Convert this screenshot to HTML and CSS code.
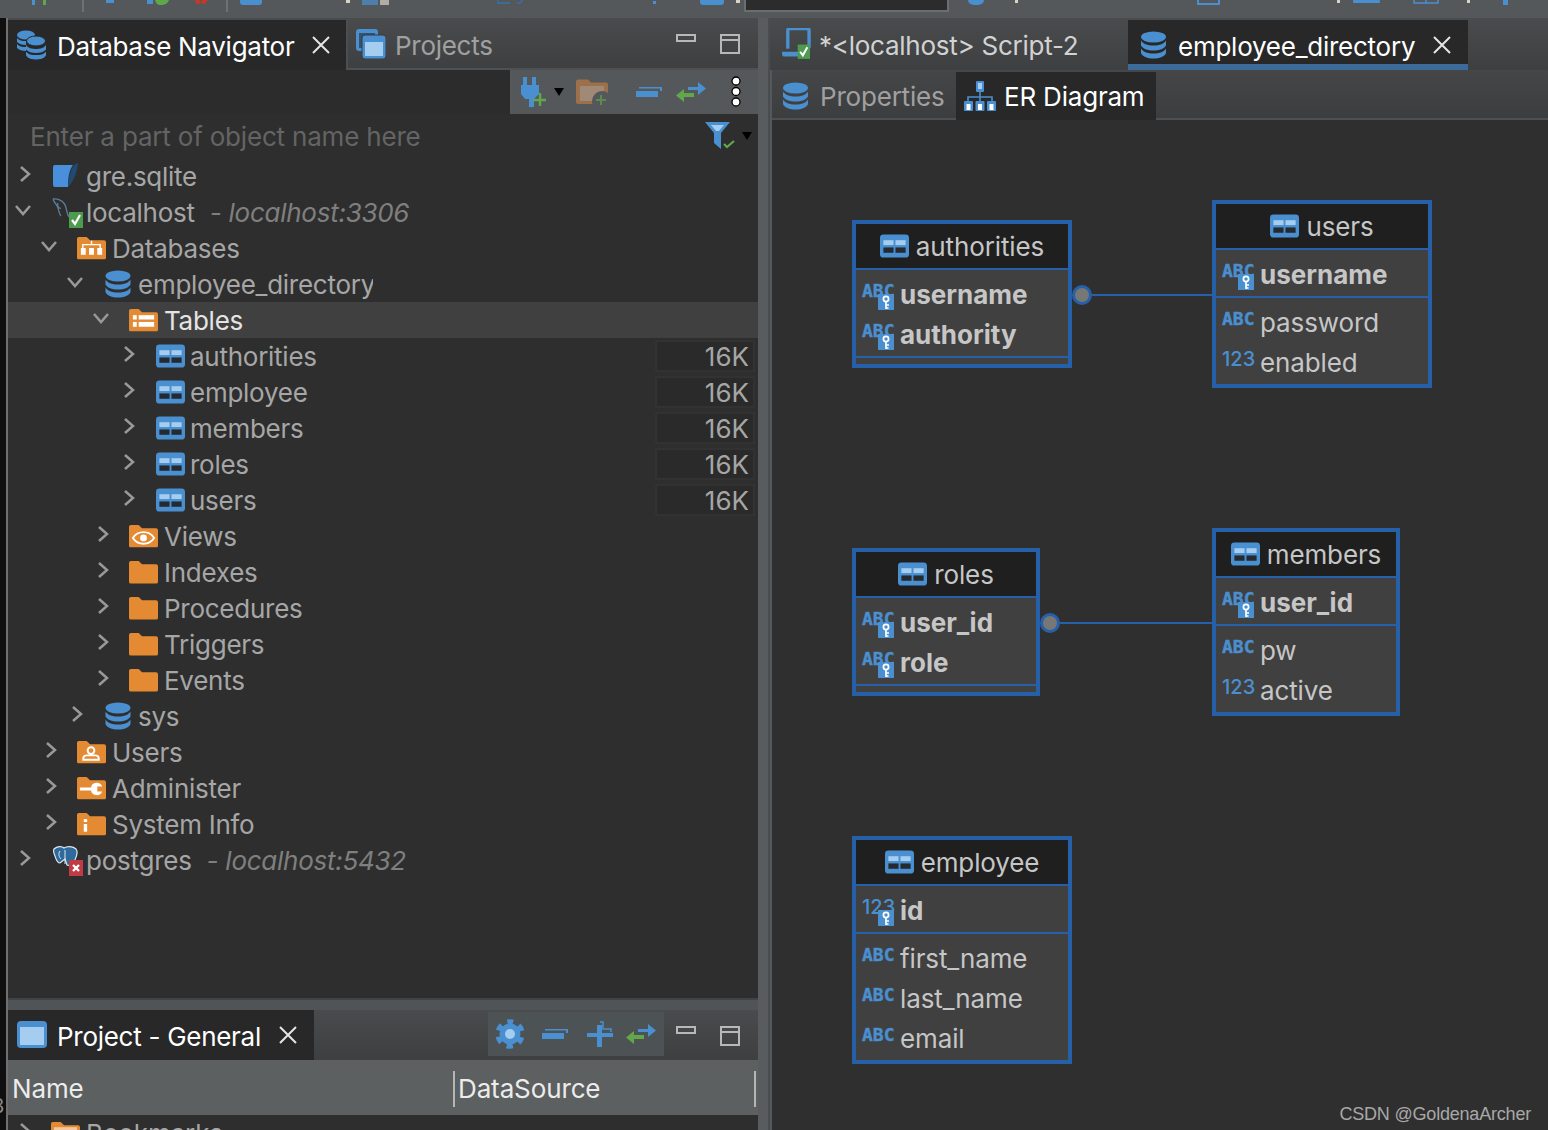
FILE: index.html
```html
<!DOCTYPE html>
<html lang="en">
<head>
<meta charset="utf-8">
<title>DBeaver</title>
<link rel="stylesheet" href="styles.css">
</head>
<body>
<svg class="defs" width="0" height="0" aria-hidden="true">
  <defs>
    <symbol id="table" viewBox="0 0 30 24">
      <rect width="30" height="24" rx="3.5" fill="#4a8fcf"/>
      <rect x="3.5" y="6" width="10.5" height="5" fill="#a5cdef"/><rect x="16" y="6" width="10.5" height="5" fill="#a5cdef"/>
      <rect x="3.5" y="13.5" width="10.5" height="5.5" fill="#252a30"/><rect x="16" y="13.5" width="10.5" height="5.5" fill="#252a30"/>
    </symbol>
    <symbol id="db" viewBox="0 0 26 28">
      <ellipse cx="13" cy="6" rx="12.5" ry="5.5" fill="#4a8fcf"/>
      <path d="M.5 9.5c1.5 3 6.500 5 12.500 5s11-2 12.500-5v5c-1.500 3-6.500 5-12.500 5S2 17.500.5 14.500z" fill="#4a8fcf"/>
      <path d="M.5 17.500c1.500 3 6.500 5 12.500 5s11-2 12.500-5v4.500c-1 3.500-6.500 5.500-12.500 5.500S1.500 25.500.5 22z" fill="#4a8fcf"/>
    </symbol>
    <symbol id="dbstack" viewBox="0 0 30 30">
      <ellipse cx="10" cy="5" rx="9" ry="4.500" fill="#4a8fcf"/>
      <path d="M1 8c2 2.500 5 3 9 3v4c-4 0-7-1-9-3zM1 14c2 2.500 5 3 9 3v4c-4 0-7-1-9-3z" fill="#4a8fcf"/>
      <ellipse cx="20" cy="11" rx="9.500" ry="5" fill="#4a8fcf" stroke="#282828" stroke-width="1"/>
      <path d="M10 15c2 3 6 4 10 4s8-1 10-4v4.500c-2 2.500-6 3.500-10 3.500s-8-1-10-3.500z" fill="#4a8fcf"/>
      <path d="M10 21.500c2 3 6 3.500 10 3.500s8-.5 10-3.500v4c-2 3-6 4-10 4s-8-1-10-4z" fill="#4a8fcf"/>
    </symbol>
    <symbol id="folder" viewBox="0 0 30 24">
      <path d="M0 2.500A2 2 0 0 1 2 .5h8l3.500 3.500H28a2 2 0 0 1 2 2V22a2 2 0 0 1-2 2H2a2 2 0 0 1-2-2z" fill="#e38a33"/>
    </symbol>
    <symbol id="fdb" viewBox="0 0 30 24">
      <use href="#folder"/>
      <path d="M15 4.500v4M6 12V8.500h18V12" fill="none" stroke="#fff" stroke-width="1.500"/>
      <rect x="4" y="12" width="5" height="7" fill="#fff"/><rect x="12.500" y="12" width="5" height="7" fill="#fff"/><rect x="21" y="12" width="5" height="7" fill="#fff"/>
    </symbol>
    <symbol id="ftab" viewBox="0 0 30 24">
      <use href="#folder"/>
      <rect x="4" y="7" width="4" height="4.500" fill="#fff"/><rect x="10" y="7" width="16" height="4.500" fill="#fff"/>
      <rect x="4" y="14" width="4" height="5" fill="#fff"/><rect x="10" y="14" width="16" height="5" fill="#fff"/>
    </symbol>
    <symbol id="feye" viewBox="0 0 30 24">
      <use href="#folder"/>
      <path d="M4 14c3-4.500 7-6 11-6s8 1.500 11 6c-3 4.500-7 6-11 6s-8-1.500-11-6z" fill="none" stroke="#fff" stroke-width="2"/>
      <circle cx="15" cy="14" r="3.500" fill="#fff"/>
    </symbol>
    <symbol id="fuser" viewBox="0 0 30 24">
      <use href="#folder"/>
      <circle cx="14.500" cy="10.500" r="3.500" fill="none" stroke="#fff" stroke-width="2"/>
      <path d="M6.500 20v-1.500c0-2 2-3 3.500-3h9c1.500 0 3.500 1 3.500 3V20z" fill="none" stroke="#fff" stroke-width="2"/>
    </symbol>
    <symbol id="fwrench" viewBox="0 0 30 24">
      <use href="#folder"/>
      <path d="M3 11.500h11.500a6 6 0 0 1 11.500-1h-5v5h5a6 6 0 0 1-11.500-1H3z" fill="#fff"/>
    </symbol>
    <symbol id="finfo" viewBox="0 0 30 24">
      <use href="#folder"/>
      <rect x="7" y="7" width="3.500" height="3" fill="#fff"/><rect x="7" y="12" width="3.500" height="8" fill="#fff"/>
    </symbol>
    <symbol id="x" viewBox="0 0 18 18">
      <path d="M1 1l16 16M17 1L1 17" stroke="currentColor" stroke-width="2" fill="none"/>
    </symbol>
    <symbol id="right" viewBox="0 0 12 18">
      <path d="M2 2l8 7-8 7" fill="none" stroke="#999" stroke-width="2.500"/>
    </symbol>
    <symbol id="down" viewBox="0 0 18 12">
      <path d="M2 2l7 8 7-8" fill="none" stroke="#999" stroke-width="2.500"/>
    </symbol>
    <symbol id="window" viewBox="0 0 30 30">
      <rect x="0" y="0" width="22" height="22" rx="3" fill="#4a8fcf"/>
      <rect x="3" y="4" width="16" height="15" fill="#35536f"/>
      <rect x="6" y="6" width="24" height="24" rx="3" fill="#4a8fcf" stroke="#3a3b3d"/>
      <rect x="9" y="13" width="18" height="14" fill="#a5cdef"/>
    </symbol>
    <symbol id="keycap" viewBox="0 0 16 16">
      <rect width="16" height="16" fill="#4a8fcf"/>
      <circle cx="8" cy="5" r="2.600" fill="none" stroke="#fff" stroke-width="1.700"/>
      <path d="M8 7.500v7.500M8 11h3M8 14h2.500" stroke="#fff" stroke-width="1.700" fill="none"/>
    </symbol>
    <symbol id="collapse" viewBox="0 0 26 10">
      <path d="M0 4h22v6H0zM3 0h23v4h-2V1.500H3z" fill="#4a8fcf"/>
    </symbol>
    <symbol id="link" viewBox="0 0 30 20">
      <path d="M12 5h10V0l8 6.500-8 6.500V8H12z" fill="#4a8fcf"/>
      <path d="M18 11H8V7l-8 6.500L8 20v-5h10z" fill="#62a84a"/>
    </symbol>
    <symbol id="min" viewBox="0 0 20 8"><rect x="1" y="1" width="18" height="6" fill="none" stroke="#b8b8b8" stroke-width="2"/></symbol>
    <symbol id="max" viewBox="0 0 20 20"><path d="M1 1h18v18H1zM1 6h18" fill="none" stroke="#b8b8b8" stroke-width="2"/></symbol>
    <symbol id="okbadge" viewBox="0 0 14 16">
      <rect width="14" height="16" fill="#4e9a4e"/>
      <path d="M3 8l3 4 5-9" fill="none" stroke="#fff" stroke-width="2.200"/>
    </symbol>
    <symbol id="tri" viewBox="0 0 10 8"><path d="M0 0h10L5 8z" fill="#000"/></symbol>
  </defs>
</svg>

<svg class="topbar" viewBox="0 0 1548 18" width="1548" height="18" aria-hidden="true">
  <g fill="#4a8fcf">
    <rect x="32" y="0" width="3" height="5"/><rect x="106" y="0" width="8" height="3"/><rect x="147" y="0" width="6" height="4"/>
    <path d="M240 0h22v2a3 3 0 0 1-3 3h-16a3 3 0 0 1-3-3z"/><rect x="653" y="1" width="3" height="3"/>
    <path d="M700 0h24v2a3 3 0 0 1-3 3h-18a3 3 0 0 1-3-3z"/><path d="M968 0h16c0 3-3 5-8 5s-8-2-8-5z"/>
    <rect x="1353" y="0" width="27" height="3" rx="1"/><rect x="1503" y="0" width="5" height="5"/>
    <rect x="362" y="0" width="16" height="5" opacity=".7"/>
  </g>
  <g fill="#5fa84a"><rect x="43" y="0" width="3" height="5"/><path d="M155 0h14c-1 3-4 5-8 5s-5-2-6-5z"/></g>
  <path d="M195 0h5l1 2 2-2h5l-3 4h-3l-2-2-1 2h-3z" fill="#c0392b"/>
  <g fill="#6d7173"><rect x="82" y="0" width="2" height="12"/><rect x="226" y="0" width="2" height="12"/></g>
  <g fill="#d9d2c5"><rect x="346" y="0" width="4" height="3"/><rect x="736" y="0" width="4" height="3"/><rect x="1015" y="0" width="3" height="3"/><rect x="1337" y="0" width="3" height="3"/><rect x="1467" y="0" width="3" height="3"/><rect x="380" y="0" width="9" height="5" opacity=".7"/></g>
  <path d="M498 0v3h12M522 0c0 3-2 3-5 3" fill="none" stroke="#3d6b99" stroke-width="2"/>
  <path d="M1198 0v4h21V0" fill="none" stroke="#4a8fcf" stroke-width="2"/>
  <path d="M1414 0v3h24V0M1426 0v3" fill="none" stroke="#4a8fcf" stroke-width="1.500"/>
  <rect x="745" y="-2" width="203" height="13" fill="#2c2c2c" stroke="#6a6e70" stroke-width="2"/>
</svg>

<div class="app">
  <div class="strip"><span class="strip-char">8</span></div>

  <section class="leftcol">
    <div class="tabs">
      <div class="tab active nav-tab">
        <svg class="tabicon"><use href="#dbstack"/></svg>
        <span>Database Navigator</span>
        <svg class="close"><use href="#x"/></svg>
      </div>
      <div class="tab plain">
        <svg class="tabicon"><use href="#window"/></svg>
        <span>Projects</span>
      </div>
      <div class="winctl">
        <svg class="ctl-min"><use href="#min"/></svg>
        <svg class="ctl-max"><use href="#max"/></svg>
      </div>
    </div>

    <div class="navtools">
      <div class="toolgroup">
        <svg class="t-plug" viewBox="0 0 26 30"><path d="M3 0h4v8h5V0h4v8h3v9l-5 5v8H9v-8H5l-4-5V8h2z" fill="#4a8fcf"/><path d="M20 16v13M13 23h13" stroke="#62a84a" stroke-width="2.400"/></svg>
        <svg class="t-tri"><use href="#tri"/></svg>
        <svg class="t-folder" viewBox="0 0 32 26"><path d="M0 2.500A2 2 0 0 1 2 .5h10l3 3h15a2 2 0 0 1 2 2V23a2 2 0 0 1-2 2H2a2 2 0 0 1-2-2z" fill="#9b704a"/><rect x="4" y="7" width="24" height="15" fill="#a08a76"/><circle cx="26" cy="22" r="10" fill="#54585a"/><path d="M25 16v10M20 21h10" stroke="#5f8a4d" stroke-width="2"/></svg>
        <svg class="t-collapse"><use href="#collapse"/></svg>
        <svg class="t-link"><use href="#link"/></svg>
        <svg class="t-kebab" viewBox="0 0 12 32"><g fill="#fff" stroke="#000" stroke-width="1.300"><circle cx="6" cy="5" r="4"/><circle cx="6" cy="15.500" r="4"/><circle cx="6" cy="26" r="4"/></g></svg>
      </div>
    </div>

    <div class="filter">
      <span class="placeholder">Enter a part of object name here</span>
      <svg class="funnel" viewBox="0 0 32 28"><path d="M0 0h25l-9 11v16l-7-6V11z" fill="#4a8fcf"/><path d="M6 3h13l-5 6h-3z" fill="#a5cdef"/><path d="M19 22l3 3 7-6" fill="none" stroke="#62a84a" stroke-width="2.200"/></svg>
      <svg class="filter-tri"><use href="#tri"/></svg>
    </div>

    <div class="tree">
      <div class="row l0"><svg class="chev"><use href="#right"/></svg>
        <svg class="ic" viewBox="0 0 29 26"><path d="M3 2h18c-3 4-5 10-5 22H3a2 2 0 0 1-2-2V4a2 2 0 0 1 2-2z" fill="#4a8fdb"/><path d="M26 0c-5 1-9 8-10 24 4-4 9-12 10-24z" fill="#214a73"/></svg>
        <span class="label">gre.sqlite</span></div>
      <div class="row l0"><svg class="chevd"><use href="#down"/></svg>
        <span class="ic badged"><svg class="fill" viewBox="0 0 29 26"><path d="M1 1c6-1 12 3 13 9 1 3 1 6 3 9M1 1c1 4 4 5 5 9 1 3 1 6 3 8M6 5c-1 3 1 6 3 5" fill="none" stroke="#597d98" stroke-width="1.300"/></svg><svg class="badge"><use href="#okbadge"/></svg></span>
        <span class="label">localhost</span><em class="sub">- localhost:3306</em></div>
      <div class="row l1"><svg class="chevd"><use href="#down"/></svg><svg class="ic icf"><use href="#fdb"/></svg><span class="label">Databases</span></div>
      <div class="row l2"><svg class="chevd"><use href="#down"/></svg><svg class="ic icdb"><use href="#db"/></svg><span class="label clip">employee_directory</span></div>
      <div class="row l3 selected"><svg class="chevd"><use href="#down"/></svg><svg class="ic icf"><use href="#ftab"/></svg><span class="label">Tables</span></div>
      <div class="row l4"><svg class="chev"><use href="#right"/></svg><svg class="ic ict"><use href="#table"/></svg><span class="label">authorities</span><span class="size">16K</span></div>
      <div class="row l4"><svg class="chev"><use href="#right"/></svg><svg class="ic ict"><use href="#table"/></svg><span class="label">employee</span><span class="size">16K</span></div>
      <div class="row l4"><svg class="chev"><use href="#right"/></svg><svg class="ic ict"><use href="#table"/></svg><span class="label">members</span><span class="size">16K</span></div>
      <div class="row l4"><svg class="chev"><use href="#right"/></svg><svg class="ic ict"><use href="#table"/></svg><span class="label">roles</span><span class="size">16K</span></div>
      <div class="row l4"><svg class="chev"><use href="#right"/></svg><svg class="ic ict"><use href="#table"/></svg><span class="label">users</span><span class="size">16K</span></div>
      <div class="row l3"><svg class="chev"><use href="#right"/></svg><svg class="ic icf"><use href="#feye"/></svg><span class="label">Views</span></div>
      <div class="row l3"><svg class="chev"><use href="#right"/></svg><svg class="ic icf"><use href="#folder"/></svg><span class="label">Indexes</span></div>
      <div class="row l3"><svg class="chev"><use href="#right"/></svg><svg class="ic icf"><use href="#folder"/></svg><span class="label">Procedures</span></div>
      <div class="row l3"><svg class="chev"><use href="#right"/></svg><svg class="ic icf"><use href="#folder"/></svg><span class="label">Triggers</span></div>
      <div class="row l3"><svg class="chev"><use href="#right"/></svg><svg class="ic icf"><use href="#folder"/></svg><span class="label">Events</span></div>
      <div class="row l2"><svg class="chev"><use href="#right"/></svg><svg class="ic icdb"><use href="#db"/></svg><span class="label">sys</span></div>
      <div class="row l1"><svg class="chev"><use href="#right"/></svg><svg class="ic icf"><use href="#fuser"/></svg><span class="label">Users</span></div>
      <div class="row l1"><svg class="chev"><use href="#right"/></svg><svg class="ic icf"><use href="#fwrench"/></svg><span class="label">Administer</span></div>
      <div class="row l1"><svg class="chev"><use href="#right"/></svg><svg class="ic icf"><use href="#finfo"/></svg><span class="label">System Info</span></div>
      <div class="row l0"><svg class="chev"><use href="#right"/></svg>
        <span class="ic badged"><svg class="fill" viewBox="0 0 29 26"><path d="M2 3c3-3 8-3 10-1 3-2 9-2 12 1 3 4 0 9-2 13l-2 4-5-1-2-6-5 4c-3 0-4-4-5-7-1-2-2-5-1-7z" fill="#2f6a9c" stroke="#e0e8ee" stroke-width="1.200"/><path d="M13 4v14M8 5c-2 3-1 6 1 8" fill="none" stroke="#e0e8ee" stroke-width="1"/></svg><svg class="badge" viewBox="0 0 14 16"><rect width="14" height="16" fill="#c23a45"/><path d="M4 5l6 6M10 5l-6 6" stroke="#fff" stroke-width="2.400"/></svg></span>
        <span class="label">postgres</span><em class="sub">- localhost:5432</em></div>
    </div>

    <div class="hsplit"></div>

    <div class="tabs lower">
      <div class="tab active proj-tab">
        <svg class="tabicon" viewBox="0 0 30 28"><rect width="30" height="27" rx="4" fill="#4a8fcf"/><rect x="3" y="6" width="24" height="18" fill="#a5cdef"/></svg>
        <span>Project - General</span>
        <svg class="close"><use href="#x"/></svg>
      </div>
      <div class="projtools">
        <svg class="p-gear" viewBox="0 0 30 30"><circle cx="15" cy="15" r="10.500" fill="#4a8fcf"/><circle cx="15" cy="15" r="12" fill="none" stroke="#4a8fcf" stroke-width="5.500" stroke-dasharray="6.283 6.283" stroke-dashoffset="3.142" transform="rotate(-90 15 15)"/><circle cx="15" cy="15" r="5" fill="#a5cdef"/></svg>
        <svg class="p-collapse"><use href="#collapse"/></svg>
        <svg class="p-expand" viewBox="0 0 26 26"><path d="M10 4h5v8h11v4H15v10h-5V16H0v-4h10z" fill="#4a8fcf"/><path d="M13 1h3v7h8v3" fill="none" stroke="#4a8fcf" stroke-width="1.500"/></svg>
        <svg class="p-link"><use href="#link"/></svg>
      </div>
      <div class="winctl">
        <svg class="ctl-min"><use href="#min"/></svg>
        <svg class="ctl-max"><use href="#max"/></svg>
      </div>
    </div>

    <div class="grid-head">
      <span class="col col-name">Name</span>
      <span class="col col-src">DataSource</span>
    </div>
    <div class="lower-tree">
      <div class="row l0 lower-row"><svg class="chev"><use href="#right"/></svg>
        <svg class="ic icf" viewBox="0 0 30 24"><use href="#folder"/><rect x="3" y="6" width="24" height="16" fill="#f0c9a0"/></svg>
        <span class="label">Bookmarks</span></div>
    </div>
  </section>

  <div class="vsplit"></div>

  <section class="rightcol">
    <div class="edtabs">
      <div class="etab script">
        <svg class="laptop" viewBox="0 0 30 32"><path d="M6 2a2 2 0 0 1 2-2h18a2 2 0 0 1 2 2v18M6 2v19" fill="none" stroke="#4a8fcf" stroke-width="3.500"/><path d="M0 24h18v5H3a3 3 0 0 1-3-3z" fill="#4a8fcf"/><use href="#okbadge" x="16" y="16" width="13" height="16"/></svg>
        <span>*&lt;localhost&gt; Script-2</span>
      </div>
      <div class="etab current">
        <svg class="edb"><use href="#db"/></svg>
        <span>employee_directory</span>
        <svg class="close"><use href="#x"/></svg>
      </div>
    </div>
    <div class="subtabs">
      <div class="stab props"><svg class="edb"><use href="#db"/></svg><span>Properties</span></div>
      <div class="stab erd">
        <svg class="ericon" viewBox="0 0 32 30"><rect x="12" y="0" width="8" height="11" rx="1" fill="#4a8fcf"/><rect x="14" y="2" width="4" height="6" fill="#a5cdef"/><path d="M16 11v5M4 21v-5h24v5M16 16v5" fill="none" stroke="#4a8fcf" stroke-width="1.600"/><g fill="#4a8fcf"><rect x="0" y="20" width="9" height="10" rx="1"/><rect x="11.500" y="20" width="9" height="10" rx="1"/><rect x="23" y="20" width="9" height="10" rx="1"/></g><g fill="#fff"><rect x="2.500" y="23" width="4" height="6"/><rect x="14" y="23" width="4" height="6"/><rect x="25.500" y="23" width="4" height="6"/></g></svg>
        <span>ER Diagram</span>
      </div>
    </div>

    <div class="canvas">
      <div class="edge edge-a"></div><div class="dot dot-a"></div>
      <div class="edge edge-b"></div><div class="dot dot-b"></div>

      <div class="node n-auth">
        <div class="nhead"><svg class="nicon"><use href="#table"/></svg><span>authorities</span></div>
        <div class="nsec pk">
          <div class="nrow"><span class="type abc">ABC<svg class="key"><use href="#keycap"/></svg></span><span>username</span></div>
          <div class="nrow"><span class="type abc">ABC<svg class="key"><use href="#keycap"/></svg></span><span>authority</span></div>
        </div>
        <div class="nsec tail"></div>
      </div>

      <div class="node n-users">
        <div class="nhead"><svg class="nicon"><use href="#table"/></svg><span>users</span></div>
        <div class="nsec pk">
          <div class="nrow"><span class="type abc">ABC<svg class="key"><use href="#keycap"/></svg></span><span>username</span></div>
        </div>
        <div class="nsec">
          <div class="nrow"><span class="type abc">ABC</span><span>password</span></div>
          <div class="nrow"><span class="type num">123</span><span>enabled</span></div>
        </div>
      </div>

      <div class="node n-roles">
        <div class="nhead"><svg class="nicon"><use href="#table"/></svg><span>roles</span></div>
        <div class="nsec pk">
          <div class="nrow"><span class="type abc">ABC<svg class="key"><use href="#keycap"/></svg></span><span>user_id</span></div>
          <div class="nrow"><span class="type abc">ABC<svg class="key"><use href="#keycap"/></svg></span><span>role</span></div>
        </div>
        <div class="nsec tail"></div>
      </div>

      <div class="node n-members">
        <div class="nhead"><svg class="nicon"><use href="#table"/></svg><span>members</span></div>
        <div class="nsec pk">
          <div class="nrow"><span class="type abc">ABC<svg class="key"><use href="#keycap"/></svg></span><span>user_id</span></div>
        </div>
        <div class="nsec">
          <div class="nrow"><span class="type abc">ABC</span><span>pw</span></div>
          <div class="nrow"><span class="type num">123</span><span>active</span></div>
        </div>
      </div>

      <div class="node n-emp">
        <div class="nhead"><svg class="nicon"><use href="#table"/></svg><span>employee</span></div>
        <div class="nsec pk">
          <div class="nrow"><span class="type num">123<svg class="key"><use href="#keycap"/></svg></span><span>id</span></div>
        </div>
        <div class="nsec">
          <div class="nrow"><span class="type abc">ABC</span><span>first_name</span></div>
          <div class="nrow"><span class="type abc">ABC</span><span>last_name</span></div>
          <div class="nrow"><span class="type abc">ABC</span><span>email</span></div>
        </div>
      </div>

      <div class="watermark">CSDN @GoldenaArcher</div>
    </div>
  </section>
</div>
</body>
</html>
```
FILE: styles.css
```css
* { box-sizing: border-box; }
html, body { margin: 0; padding: 0; height: 100%; }
body {
  width: 1548px;
  height: 1130px;
  overflow: hidden;
  background: #54585b;
  font-family: Inter, "Noto Sans", sans-serif;
  font-size: 26px;
  letter-spacing: -.12px;
  color: #a6a6a6;
}
svg { display: block; flex: none; }
.defs { position: absolute; }
.topbar { height: 18px; }

.app { display: flex; height: 1112px; }
.strip {
  width: 8px;
  background: #0f0f0f;
  border-right: 2px solid #6f6f6f;
  overflow: hidden;
  position: relative;
}
.strip-char {
  position: absolute;
  left: -8px;
  top: 1076px;
  font-size: 20px;
  color: #8a8a8a;
}

.leftcol { width: 750px; display: flex; flex-direction: column; }
.vsplit {
  width: 12px;
  background: linear-gradient(to right, #585c5f 0 10px, #4a4d50 10px);
}
.rightcol { flex: 1; display: flex; flex-direction: column; min-width: 0; }

/* tabs */
.tabs {
  height: 52px;
  display: flex;
  align-items: flex-end;
  background: linear-gradient(#4a4b4d, #3e3f41);
  border-bottom: 2px solid #4f5052;
  position: relative;
}
.tabs.lower { height: 50px; border-bottom: 0; align-items: stretch; }
.tab {
  display: flex;
  align-items: center;
  height: 50px;
  margin-bottom: -2px;
  white-space: nowrap;
  letter-spacing: -.28px;
}
.tab span { margin-top: 3px; }
.tabs.lower .tab { margin-bottom: 0; }
.tabs.lower .tab span { margin-top: 2px; }
.tab.active { background: #282828; color: #fff; }
.nav-tab { width: 338px; padding-left: 8px; }
.proj-tab { width: 306px; padding-left: 9px; }
.nav-tab .tabicon { margin-right: 11px; }
.tab.plain { padding-left: 8px; border-left: 2px solid #4d4e50; height: 48px; margin-bottom: 0; color: #a0a0a0; }
.tabicon { width: 30px; height: 30px; margin-right: 10px; }
.tab.plain .tabicon { margin-right: 9px; }
.close { width: 18px; height: 18px; margin-left: 18px; color: #e6e6e6; }
.winctl {
  position: absolute;
  right: 0;
  top: 14px;
  width: 82px;
  display: flex;
  align-items: flex-start;
  gap: 24px;
}
.tabs.lower .winctl { top: 14px; }
.ctl-min { width: 20px; height: 8px; margin-top: 2px; }
.ctl-max { width: 20px; height: 20px; margin-top: 2px; }

.navtools {
  height: 44px;
  background: #2c2c2c;
  display: flex;
  justify-content: flex-end;
}
.toolgroup {
  width: 248px;
  background: #54585a;
  display: flex;
  align-items: center;
  padding-left: 10px;
}
.t-plug { width: 26px; height: 30px; }
.t-tri { width: 10px; height: 8px; margin-left: 8px; }
.t-folder { width: 32px; height: 26px; margin-left: 12px; }
.t-collapse { width: 26px; height: 10px; margin-left: 28px; }
.t-link { width: 30px; height: 20px; margin-left: 14px; }
.t-kebab { width: 12px; height: 32px; margin-left: 24px; }

.filter {
  height: 44px;
  background: #2e2e2e;
  display: flex;
  align-items: center;
  padding-left: 22px;
}
.placeholder { color: #646464; letter-spacing: -.19px; }
.funnel { width: 32px; height: 28px; margin-left: auto; }
.filter-tri { width: 10px; height: 8px; margin-left: 5px; margin-right: 6px; }

/* navigator tree */
.tree { height: 840px; background: #2e2e2e; overflow: hidden; letter-spacing: -.26px; }
.row {
  height: 36px;
  display: flex;
  align-items: center;
  white-space: nowrap;
}
.row.selected { background: #404040; color: #e4e4e4; }
.l0 { padding-left: 7px; }
.l1 { padding-left: 33px; }
.l2 { padding-left: 59px; }
.l3 { padding-left: 85px; }
.l4 { padding-left: 111px; }
.chev { width: 12px; height: 18px; margin: -4px 21px 0 4px; }
.chevd { width: 18px; height: 12px; margin: -4px 20px 0 -1px; }
.ic { width: 29px; height: 26px; margin-right: 5px; position: relative; display: block; flex: none; }
.icf { height: 24px; width: 29px; margin-left: -1px; margin-right: 6px; }
.icdb { width: 26px; height: 28px; margin-left: 1px; margin-right: 7px; }
.ict { width: 29px; height: 24px; margin-right: 5px; }
.fill { width: 29px; height: 26px; }
.badged { margin-top: -2px; }
.badge { position: absolute; right: -2px; bottom: -4px; width: 14px; height: 16px; }
.label { display: block; }
.clip { width: 235px; overflow: hidden; }
.sub { margin-left: 15px; color: #7f7f7f; font-style: italic; }
.size {
  margin-left: auto;
  margin-right: 3px;
  width: 100px;
  height: 32px;
  line-height: 30px;
  text-align: right;
  padding-right: 4px;
  background: #2a2a2a;
  border: 2px solid #323232;
  letter-spacing: 0;
}

.hsplit { height: 12px; background: linear-gradient(#414446 0 2px, #505457 2px); }
.projtools {
  position: absolute;
  left: 480px;
  top: 2px;
  width: 176px;
  height: 44px;
  background: #4d5255;
  display: flex;
  align-items: center;
  padding-left: 7px;
}
.p-gear { width: 30px; height: 30px; }
.p-collapse { width: 26px; height: 10px; margin-left: 17px; }
.p-expand { width: 26px; height: 26px; margin-left: 19px; }
.p-link { width: 30px; height: 20px; margin-left: 13px; }

.grid-head {
  height: 55px;
  background: #5c6060;
  display: flex;
  align-items: center;
  color: #ececec;
}
.col { display: flex; align-items: center; height: 36px; margin-top: 2px; }
.col-name { width: 445px; padding-left: 4px; }
.col-src { width: 303px; padding-left: 3px; border-left: 2px solid #b4b6b6; border-right: 2px solid #b4b6b6; }
.lower-tree { flex: 1; background: #2e2e2e; overflow: hidden; }
.lower-row { height: 36px; }

/* editor */
.edtabs {
  height: 52px;
  display: flex;
  align-items: flex-end;
  background: linear-gradient(#4a4b4d, #3e3f41);
}
.etab { display: flex; align-items: center; height: 50px; white-space: nowrap; letter-spacing: -.25px; }
.etab span { margin-top: 3px; }
.script { width: 358px; padding-left: 12px; height: 48px; margin-bottom: 2px; color: #d2d2d2; }
.laptop { width: 29px; height: 32px; margin-right: 8px; }
.current {
  width: 340px;
  padding-left: 12px;
  background: #282828;
  color: #fff;
  box-shadow: inset 0 -6px #3d6b99;
}
.edb { width: 27px; height: 28px; margin-right: 11px; }
.current .close { margin-left: 18px; }
.subtabs {
  height: 50px;
  margin-left: 2px;
  display: flex;
  align-items: flex-start;
  background: linear-gradient(#454648, #3c3d3f);
  border-bottom: 2px solid #4f5052;
}
.stab { display: flex; align-items: center; height: 48px; margin-top: 2px; white-space: nowrap; }
.stab span { margin-top: 1px; }
.props { width: 184px; padding-left: 10px; color: #a0a0a0; letter-spacing: -.2px; }
.props .edb { margin-right: 11px; }
.erd { width: 200px; padding-left: 8px; background: #282828; color: #fff; letter-spacing: -.2px; }
.ericon { width: 32px; height: 30px; margin-right: 8px; }

.canvas {
  position: relative;
  flex: 1;
  margin-left: 2px;
  background: #2f2f2f;
  overflow: hidden;
}
.node {
  position: absolute;
  border: 4px solid #2560a8;
  background: #404040;
  color: #c6c6c6;
}
.n-auth { left: 80px; top: 100px; width: 220px; }
.n-users { left: 440px; top: 80px; width: 220px; }
.n-roles { left: 80px; top: 428px; width: 188px; }
.n-members { left: 440px; top: 408px; width: 188px; }
.n-emp { left: 80px; top: 716px; width: 220px; }
.nhead {
  height: 44px;
  background: #1f1f1f;
  display: flex;
  align-items: center;
  justify-content: center;
  gap: 7px;
}
.nicon { width: 29px; height: 24px; }
.nsec { border-top: 2px solid #2560a8; padding: 5px 0 1px; }
.nsec.tail { height: 8px; padding: 0; }
.pk { font-weight: 700; letter-spacing: 0; }
.nrow { height: 40px; display: flex; align-items: center; padding-bottom: 2px; }
.type {
  position: relative;
  width: 38px;
  margin-left: 6px;
  color: #4a8fcf;
  flex: none;
  margin-top: -6px;
  letter-spacing: 0;
}
.abc {
  font-family: "DejaVu Sans Mono", monospace;
  font-weight: 700;
  font-size: 18px;
  line-height: 20px;
  -webkit-text-stroke: .4px #4a8fcf;
}
.num {
  font-family: Inter, sans-serif;
  font-weight: 500;
  font-size: 20px;
  line-height: 20px;
}
.key { position: absolute; left: 16px; top: 13px; width: 16px; height: 16px; }
.edge { position: absolute; height: 2px; background: #2560a8; }
.edge-a { left: 316px; top: 174px; width: 124px; }
.edge-b { left: 284px; top: 502px; width: 156px; }
.dot {
  position: absolute;
  width: 20px;
  height: 20px;
  border-radius: 50%;
  background: #777;
  border: 3px solid #2560a8;
}
.dot-a { left: 300px; top: 165px; }
.dot-b { left: 268px; top: 493px; }
.watermark {
  position: absolute;
  right: 17px;
  bottom: 5px;
  font-family: "Liberation Sans", Arial, sans-serif;
  font-size: 18px;
  letter-spacing: -.2px;
  color: #a8a8a8;
}
```
